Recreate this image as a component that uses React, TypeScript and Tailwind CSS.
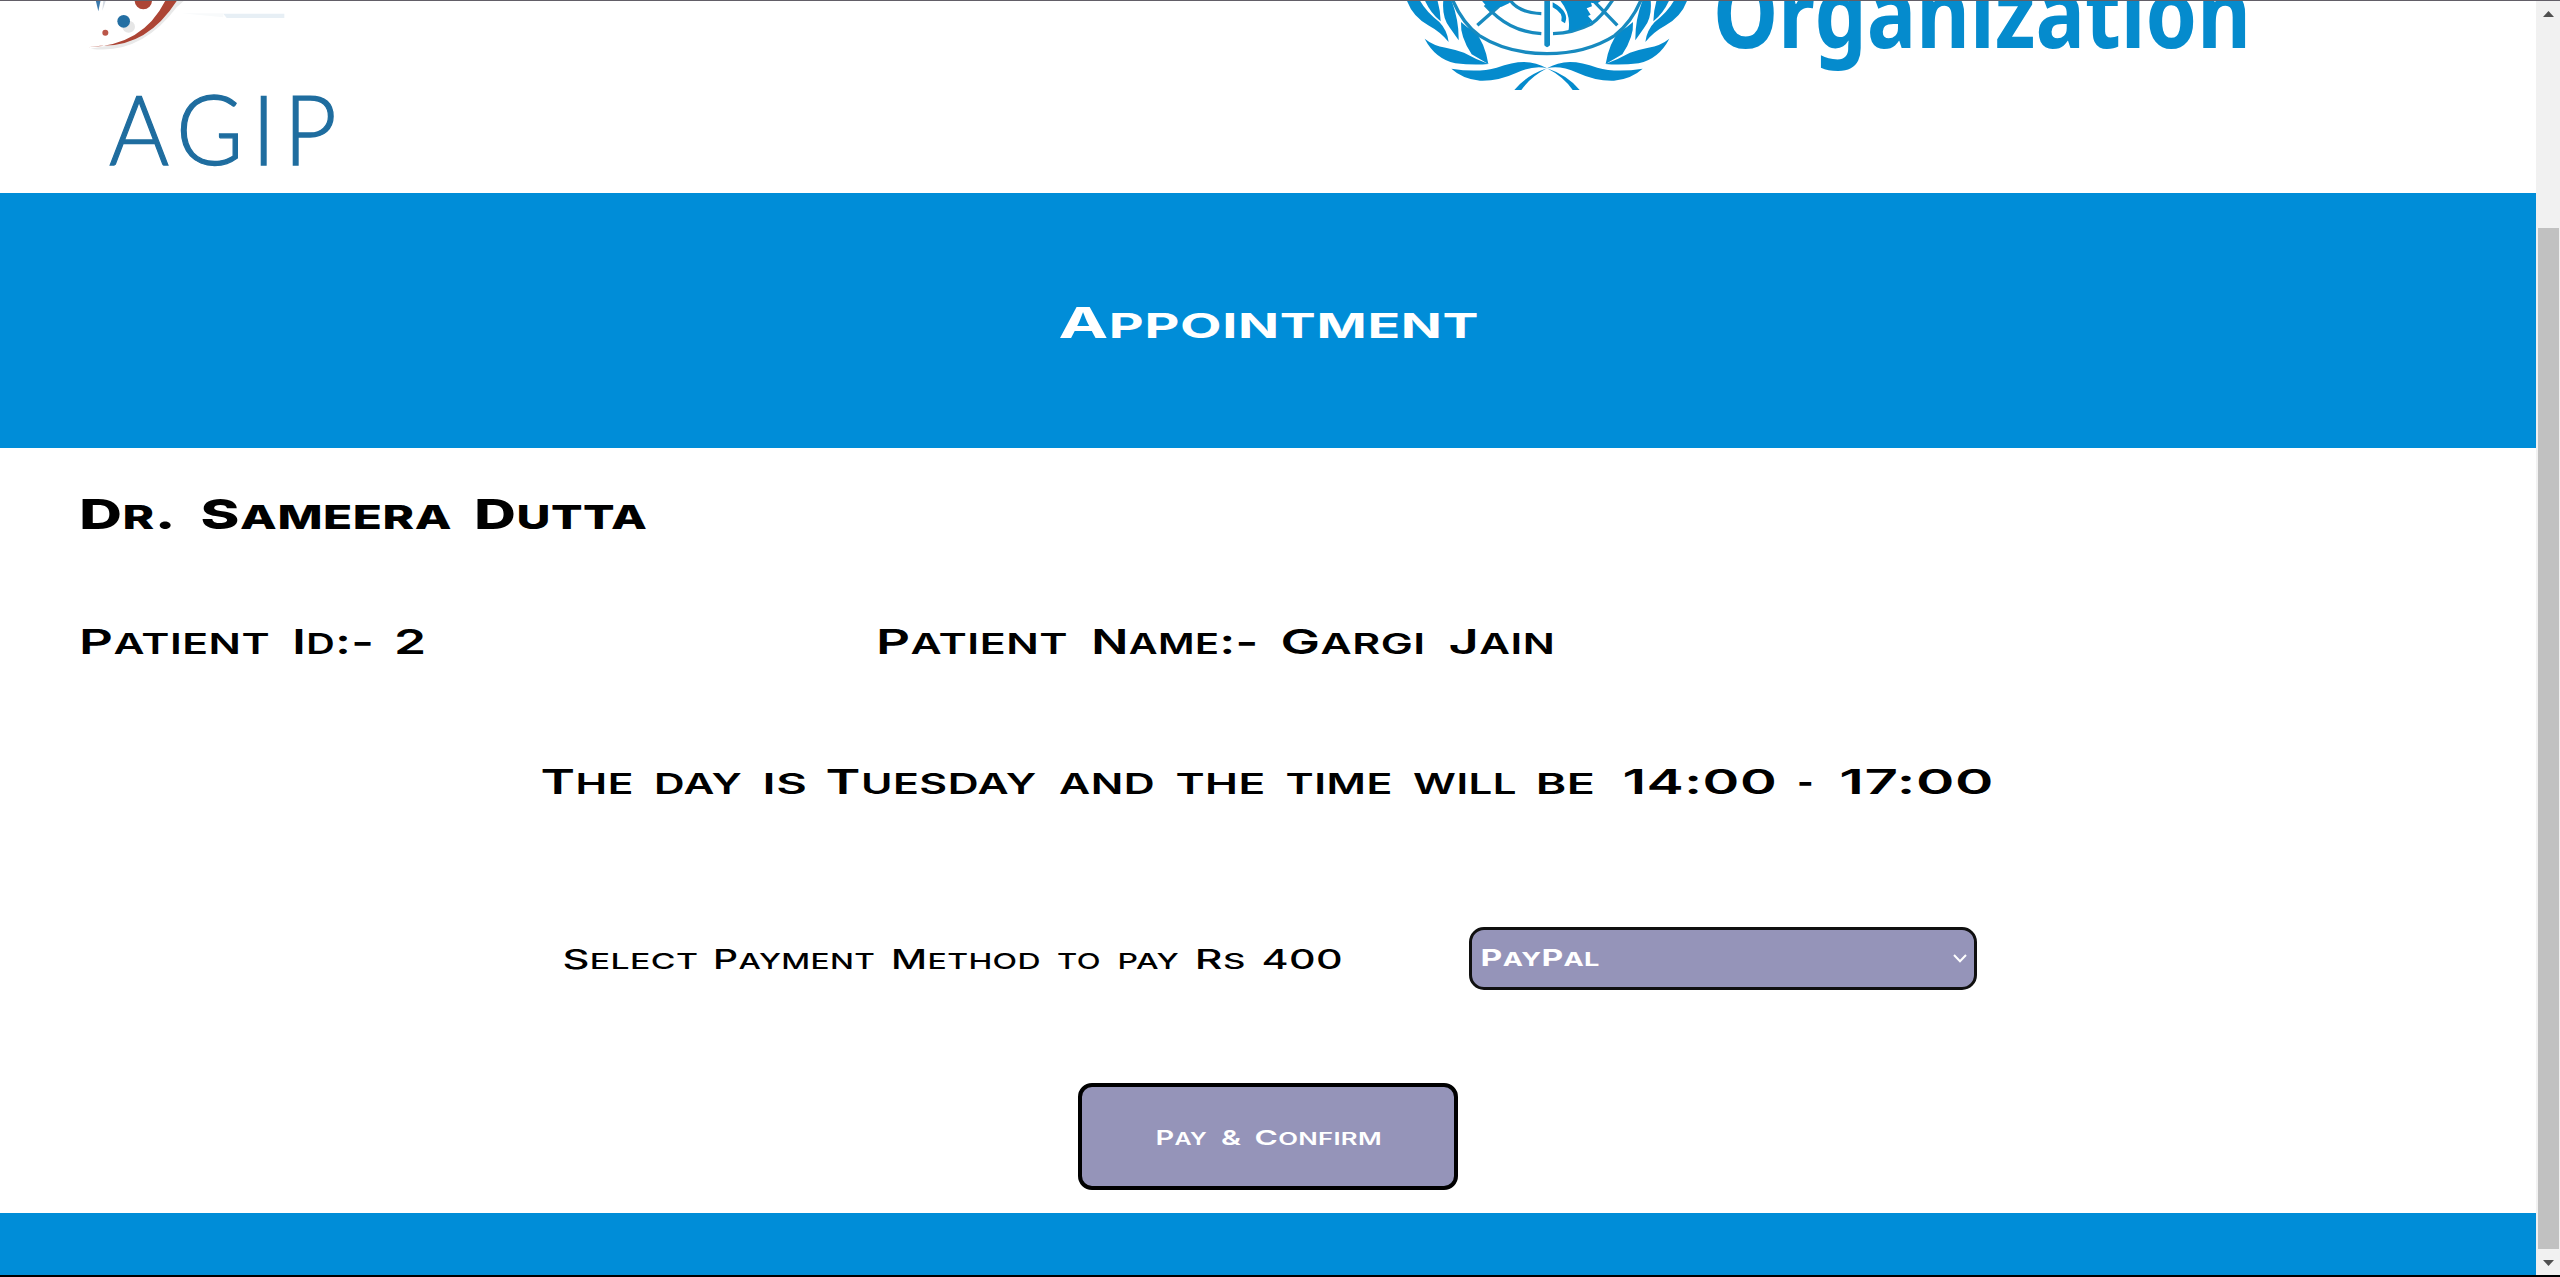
import React, { useLayoutEffect, useRef } from "react";

type WordSpec = [text: string, gap: number, width: number];

/* One word, stretched sideways so that its ink fills the given width. */
function Word({ text, gap, width }: { text: string; gap: number; width: number }) {
  const ref = useRef<HTMLSpanElement>(null);
  useLayoutEffect(() => {
    const fit = () => {
      const el = ref.current;
      if (!el) return;
      el.style.transform = "none";
      const ctx = document.createElement("canvas").getContext("2d")!;
      const parts = el.querySelectorAll("span");
      const ink = (node: Element, last: boolean) => {
        const cs = getComputedStyle(node);
        ctx.font = `${cs.fontWeight} ${cs.fontSize} ${cs.fontFamily}`;
        const t = node.textContent || "";
        let ch = last ? t[t.length - 1] : t[0];
        if (cs.textTransform === "uppercase") ch = ch.toUpperCase();
        const m = ctx.measureText(ch);
        const spacing = parseFloat(cs.letterSpacing) || 0;
        return last ? m.width - m.actualBoundingBoxRight + spacing : -m.actualBoundingBoxLeft;
      };
      const left = ink(parts[0], false);
      const right = ink(parts[parts.length - 1], true);
      const scale = width / (el.getBoundingClientRect().width - left - right);
      el.style.transform = `translateX(${-left * scale}px) scaleX(${scale})`;
    };
    fit();
    document.fonts.ready.then(fit);
  }, [text, width]);
  const runs = text.match(/[a-z]+|[^a-z]+/g) || [];
  return (
    <span className="block shrink-0 text-left whitespace-nowrap" style={{ width, marginLeft: gap }}>
      <span ref={ref} className="inline-block origin-left align-top">
        {runs.map((r, i) =>
          /[a-z]/.test(r) ? (
            <span key={i} className="text-[0.81em] leading-[0] uppercase">{r}</span>
          ) : (
            <span key={i} className="leading-[0]">{r}</span>
          )
        )}
      </span>
    </span>
  );
}

function Line({ words, className }: { words: WordSpec[]; className: string }) {
  return (
    <div className={`flex tracking-[0.01em] ${className}`}>
      {words.map(([t, g, w], i) => (
        <Word key={i} text={t} gap={g} width={w} />
      ))}
    </div>
  );
}

const doctor: WordSpec[] = [["Dr.", 81.5, 90], ["Sameera", 30, 248.5], ["Dutta", 26.5, 169]];
const patientId: WordSpec[] = [["Patient", 82, 187], ["Id:-", 26, 76], ["2", 25.5, 27]];
const patientName: WordSpec[] = [["Patient", 0, 188], ["Name:-", 26.5, 161.5], ["Gargi", 27, 140.5], ["Jain", 27, 103]];
const schedule: WordSpec[] = [
  ["The", 542, 90], ["day", 25, 85], ["is", 24, 39], ["Tuesday", 22, 209.5], ["and", 22, 94],
  ["the", 24, 87], ["time", 23, 104], ["will", 22, 102.5], ["be", 24, 54.5], ["14:00", 30.5, 150],
  ["-", 25, 12.5], ["17:00", 29.5, 149.5],
];
const payment: WordSpec[] = [
  ["Select", 563.5, 132.5], ["Payment", 19.7, 157.5], ["Method", 20.4, 146], ["to", 17.8, 43],
  ["pay", 18.3, 60], ["Rs", 19.5, 46], ["400", 19.3, 78],
];

function AgipMark() {
  return (
    <svg className="block h-[66px] w-80" viewBox="0 0 960 198">
      <path d="M92 146Q240 167 350 22L374 0H345Q255 126 122 141Z" fill="#e9e9e9" />
      <path d="M84 142Q250 137 317 0H352Q262 142 121 137Z" fill="#ad4535" />
      <ellipse cx="206" cy="80" rx="19" ry="18" fill="#e6e6e6" />
      <circle cx="191" cy="64" r="19" fill="#246fa3" />
      <circle cx="250" cy="2" r="26" fill="#ad4535" />
      <circle cx="136" cy="98" r="9" fill="#bb5648" />
      <path d="M107 0H122L115 34Z" fill="#3a79ad" />
      <path d="M138 0L127 32L130 0Z" fill="#d5dbe3" />
      <path d="M365 40H490V52Z" fill="#f8fafb" />
      <path d="M490 41H673V54H500Z" fill="#e7eff5" />
    </svg>
  );
}

function Leaves() {
  return (
    <g fill="#058bcd">
      <path d="M80 0Q98 51 147 77Q181 95 206 126Q202 91 178 66Q137 34 119 0Z" />
      <path d="M134 0Q151 39 182 64Q181 30 172 0Z" />
      <path d="M190 0Q185 55 210 84L236 121Q237 60 214 0Z" />
      <path d="M134 116Q165 176 226 190Q280 196 326 192Q284 176 252 158Q223 148 197 143Q160 137 134 116Z" />
      <path d="M243 66Q240 110 275 163L325 192Q314 126 284 96Q259 81 243 66Z" />
      <path d="M214 206Q248 237 300 242Q353 244 410 218Q465 194 501 205Q470 187 432 186Q397 186 350 203Q295 219 214 206Z" />
      <path d="M501 205Q439 226 403 270H424Q452 230 501 205Z" />
    </g>
  );
}

function WhoEmblem() {
  return (
    <svg className="block h-[110px] w-[340px] shrink-0" viewBox="0 0 1020 330">
      <Leaves />
      <g transform="translate(1002 0) scale(-1 1)"><Leaves /></g>
      <g fill="none" stroke="#178abf" strokeWidth="10">
        <path d="M218 0Q247 69 298 107Q383 161 501 161Q619 161 704 107Q756 65 783 0" />
        <path d="M315 15Q330 32 353 51Q407 96 484 101M519 101Q580 99 635 71Q665 50 698 0" />
        <path d="M390 0Q416 38 484 41" />
        <path d="M292 76L375 2M712 76L645 7" />
      </g>
      <path d="M304 0H397L387 10L365 20L350 22L335 34L322 22Z" fill="#058bcd" />
      <path d="M539 0H667L650 11L633 8L636 19L620 25L632 44L624 48L638 64Q600 91 565 94Q575 42 539 0Z" fill="#058bcd" />
      <path d="M518 7Q570 35 555 70L544 63Q551 39 518 22Z" fill="#058bcd" />
      <path d="M493 0H510V136Q501 147 493 136Z" fill="#128bc4" />
    </svg>
  );
}

function Scrollbar() {
  return (
    <div className="flex w-6 shrink-0 flex-col items-center bg-[#f1f1f1]">
      <svg className="mt-2.5 h-[6px] w-[11px]" viewBox="0 0 11 6"><path d="M5.5 0L11 6H0Z" fill="#505050" /></svg>
      <div className="mt-[211px] h-[1021px] w-[21px] bg-[#c1c1c1]" />
      <svg className="mt-[11px] h-[6px] w-[11px]" viewBox="0 0 11 6"><path d="M5.5 6L11 0H0Z" fill="#505050" /></svg>
    </div>
  );
}

export default function App() {
  return (
    <div className="flex h-[1277px] w-[2560px] flex-col overflow-hidden bg-white font-['Inter',sans-serif] text-black">
      <div className="h-px shrink-0 bg-[#625e67]" />
      <div className="flex h-[1274px] shrink-0">
        <div className="flex w-[2536px] flex-col">
          <header className="flex h-48 shrink-0 overflow-hidden">
            <div className="-mt-px ml-[60px] w-80 shrink-0">
              <AgipMark />
              <div className="mt-[27px] flex h-[70px] font-['Lato',sans-serif] text-[97px] leading-[70px] font-light tracking-[0.09em] text-[#1f6d9f] [-webkit-text-stroke:1.3px_#1f6d9f]">
                <Word text="AGIP" gap={50} width={224} />
              </div>
            </div>
            <div className="-mt-px ml-[1000px] flex">
              <WhoEmblem />
              <div className="-mt-[43px] -ml-[7px] font-['Noto_Sans',sans-serif] text-[97px] leading-[106px] font-bold text-[#058bcd]">
                <span className="inline-block origin-left scale-x-[0.852] whitespace-nowrap">Organization</span>
              </div>
            </div>
          </header>

          <section className="flex h-[255px] shrink-0 justify-center bg-[#008dd8] pt-[114px] text-white">
            <Line className="h-[31px] text-[42.6px] leading-[31px] font-bold" words={[["Appointment", 0, 417]]} />
          </section>

          <main className="flex h-[765px] shrink-0 flex-col">
            <Line className="mt-[51px] h-[30px] text-[41.2px] leading-[30px] font-extrabold" words={doctor} />
            <div className="mt-[100px] flex">
              <div className="w-[879px] shrink-0">
                <Line className="h-[25px] text-[34.4px] leading-[25px] font-semibold" words={patientId} />
              </div>
              <Line className="h-[25px] text-[34.4px] leading-[25px] font-semibold" words={patientName} />
            </div>
            <Line className="mt-[115px] h-[25px] text-[34.4px] leading-[25px] font-semibold" words={schedule} />
            <div className="mt-[133px] flex h-[63px]">
              <div className="w-[1468.5px] shrink-0 pt-[23px]">
                <Line className="h-[19px] text-[26.4px] leading-[19px] font-medium" words={payment} />
              </div>
              <button className="flex h-[63px] w-[508px] items-center justify-between rounded-[15px] border-[3.5px] border-[#101010] bg-[#9594b9] pr-[7px] pl-[10px] text-white">
                <Line className="-mt-[2px] h-[17px] text-[23.4px] leading-[17px] font-bold" words={[["PayPal", 0, 116.5]]} />
                <svg className="h-[9px] w-[14px]" viewBox="0 0 14 9" fill="none" stroke="white" strokeWidth="2">
                  <path d="M1 1L7 7.3L13 1" />
                </svg>
              </button>
            </div>
            <button className="mt-[93px] ml-[1078px] flex h-[107px] w-[380px] rounded-[14px] border-4 border-black bg-[#9594b9] pt-[43px] pl-[75px] text-white">
              <Line className="h-[15px] text-[20.6px] leading-[15px] font-semibold" words={[["Pay", 0, 50], ["&", 14, 20.5], ["Confirm", 14.5, 125]]} />
            </button>
          </main>
          <footer className="h-[62px] shrink-0 bg-[#008dd8]" />
        </div>
        <Scrollbar />
      </div>
      <div className="h-0.5 shrink-0 bg-black" />
    </div>
  );
}
